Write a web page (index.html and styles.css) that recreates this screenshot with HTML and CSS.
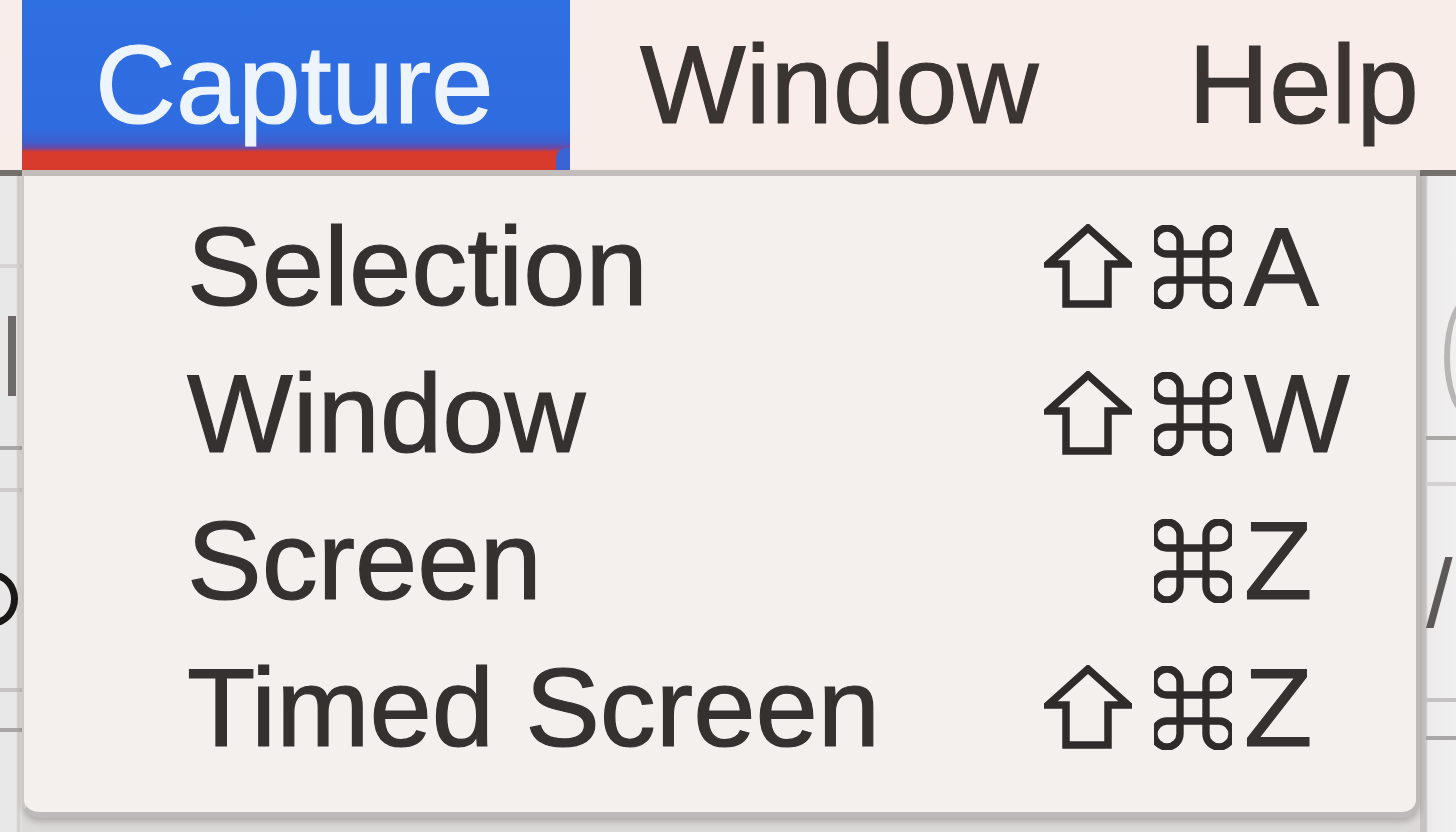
FILE: index.html
```html
<!DOCTYPE html>
<html lang="en">
<head>
<meta charset="utf-8">
<title>Capture menu</title>
<link rel="stylesheet" href="styles.css">
</head>
<body>
<div class="screen">
  <div class="menubar">
    <div class="menu-title active">Capture</div>
    <div class="menu-title window">Window</div>
    <div class="menu-title help">Help</div>
  </div>
  <div class="below">
    <div class="side side-left">
      <div class="bg-line l1"></div>
      <div class="bg-mark m1"></div>
      <div class="bg-line l2"></div>
      <div class="bg-line l3"></div>
      <div class="bg-ring"></div>
      <div class="bg-line l4"></div>
      <div class="bg-line l5"></div>
    </div>
    <div class="menu">
      <div class="item">
        <span class="label">Selection</span>
        <span class="sc-shift"><svg viewBox="0 0 88 86"><path d="M44 4 L84 40 L64 40 L64 80 L22 80 L22 40 L4 40 Z"/></svg></span>
        <span class="sc-cmd"><svg viewBox="3 3 18 18"><path d="M15 6v12a3 3 0 1 0 3-3H6a3 3 0 1 0 3 3V6a3 3 0 1 0-3 3h12a3 3 0 1 0-3-3"/></svg></span>
        <span class="sc-key">A</span>
      </div>
      <div class="item">
        <span class="label">Window</span>
        <span class="sc-shift"><svg viewBox="0 0 88 86"><path d="M44 4 L84 40 L64 40 L64 80 L22 80 L22 40 L4 40 Z"/></svg></span>
        <span class="sc-cmd"><svg viewBox="3 3 18 18"><path d="M15 6v12a3 3 0 1 0 3-3H6a3 3 0 1 0 3 3V6a3 3 0 1 0-3 3h12a3 3 0 1 0-3-3"/></svg></span>
        <span class="sc-key">W</span>
      </div>
      <div class="item">
        <span class="label">Screen</span>
        <span class="sc-shift"></span>
        <span class="sc-cmd"><svg viewBox="3 3 18 18"><path d="M15 6v12a3 3 0 1 0 3-3H6a3 3 0 1 0 3 3V6a3 3 0 1 0-3 3h12a3 3 0 1 0-3-3"/></svg></span>
        <span class="sc-key">Z</span>
      </div>
      <div class="item">
        <span class="label">Timed Screen</span>
        <span class="sc-shift"><svg viewBox="0 0 88 86"><path d="M44 4 L84 40 L64 40 L64 80 L22 80 L22 40 L4 40 Z"/></svg></span>
        <span class="sc-cmd"><svg viewBox="3 3 18 18"><path d="M15 6v12a3 3 0 1 0 3-3H6a3 3 0 1 0 3 3V6a3 3 0 1 0-3 3h12a3 3 0 1 0-3-3"/></svg></span>
        <span class="sc-key">Z</span>
      </div>
    </div>
    <div class="side side-right">
      <div class="bg-line r1"></div>
      <div class="bg-arc"></div>
      <div class="bg-line r2"></div>
      <div class="bg-slash">/</div>
      <div class="bg-line r3"></div>
      <div class="bg-line r4"></div>
    </div>
  </div>
</div>
</body>
</html>
```

FILE: styles.css
```css
html, body {
  margin: 0;
  padding: 0;
}

body {
  width: 1456px;
  height: 832px;
  overflow: hidden;
  background: #dcdad9;
  font-family: "Liberation Sans", Arial, Helvetica, sans-serif;
}

.screen {
  width: 1456px;
  height: 832px;
  display: flex;
  flex-direction: column;
}

/* ---------- menu bar ---------- */
.menubar {
  height: 170px;
  display: flex;
  align-items: stretch;
  padding-left: 22px;
  background: #f9ede9;
  flex: none;
}

.menu-title {
  font-size: 112px;
  line-height: 170px;
  color: #3a3433;
  white-space: nowrap;
  -webkit-text-stroke: 1.2px currentColor;
}

.menu-title.active {
  position: relative;
  width: 475px;
  padding-left: 73px;
  color: #eef4fb;
  background: linear-gradient(to bottom, #2e6fe2 0, #2f6ce0 128px, #3d5fce 142px, #6b4aa6 148px, #d83a2c 152px);
}

.menu-title.active::after {
  content: "";
  position: absolute;
  right: 0;
  bottom: 0;
  width: 14px;
  height: 22px;
  background: #3a63d4;
  border-radius: 10px 0 0 0;
}

.menu-title.window {
  padding-left: 70px;
}

.menu-title.help {
  padding-left: 150px;
}

/* ---------- area under the bar ---------- */
.below {
  flex: 1;
  display: flex;
  align-items: flex-start;
}

.side {
  position: relative;
  height: 662px;
  border-top: 6px solid #76706d;
  background: #eeeceb;
}

.side-left {
  width: 22px;
  flex: none;
  background: linear-gradient(to right, #e9e8e8 0, #e9e8e8 16px, #cfcdcd 18px, #e4e3e3 22px);
}

.side-right {
  flex: 1;
  background: linear-gradient(to right, #c6c3c2 0, #c6c3c2 6px, #eceaea 8px, #f1f0f0 100%);
}

.bg-line {
  position: absolute;
  left: 0;
  right: 0;
  height: 4px;
  background: #b9b7b6;
}

.l1 { top: 88px; background: #d5d3d3; }
.l2 { top: 270px; background: #a9a7a6; }
.l3 { top: 312px; background: #cdcbcb; }
.l4 { top: 512px; background: #c4c2c2; }
.l5 { top: 552px; background: #a8a6a6; }
.l6 { top: 640px; background: #d0cece; }

.bg-mark {
  position: absolute;
  left: 8px;
  top: 140px;
  width: 8px;
  height: 80px;
  background: #6e6a69;
}

.bg-ring {
  position: absolute;
  left: -30px;
  top: 396px;
  width: 34px;
  height: 40px;
  border: 7px solid #1b1818;
  border-radius: 50%;
}

.r1 { top: 260px; background: #a9a7a6; left: 6px; }
.r2 { top: 306px; background: #d2d0d0; left: 6px; }
.r3 { top: 522px; background: #c4c2c2; left: 6px; }
.r4 { top: 560px; background: #a8a6a6; left: 6px; }

.bg-arc {
  position: absolute;
  left: 24px;
  top: 120px;
  width: 40px;
  height: 110px;
  border: 6px solid #b8b6b5;
  border-radius: 50%;
}

.bg-slash {
  position: absolute;
  left: 6px;
  top: 368px;
  font-size: 96px;
  line-height: 100px;
  color: #5d5958;
}

/* ---------- dropdown menu ---------- */
.menu {
  width: 1398px;
  flex: none;
  box-sizing: border-box;
  padding: 17px 52px 31px 163px;
  background: #f4f0ee;
  border-top: 6px solid #c2bcba;
  border-left: 2px solid #cdc9c7;
  border-right: 4px solid #bdbab9;
  border-bottom: 6px solid #bdbab9;
  border-radius: 0 0 18px 18px;
  box-shadow: 0 4px 6px rgba(0, 0, 0, 0.2);
  position: relative;
  z-index: 1;
}

.item {
  display: flex;
  align-items: center;
  height: 147px;
  color: #363131;
  font-size: 112px;
  line-height: 147px;
  -webkit-text-stroke: 1.2px currentColor;
}

.label {
  flex: 1;
  white-space: nowrap;
}

.sc-shift {
  width: 88px;
  height: 86px;
  margin-right: 22px;
  flex: none;
}

.sc-cmd {
  width: 78px;
  height: 84px;
  margin-right: 12px;
  flex: none;
}

.sc-shift svg,
.sc-cmd svg {
  display: block;
  width: 100%;
  height: 100%;
  fill: none;
  stroke: #2f2b2b;
}

.sc-shift svg {
  stroke-width: 7.5;
  stroke-linejoin: miter;
}

.sc-cmd svg {
  stroke-width: 1.7;
}

.sc-key {
  width: 120px;
  flex: none;
  white-space: nowrap;
}
```
